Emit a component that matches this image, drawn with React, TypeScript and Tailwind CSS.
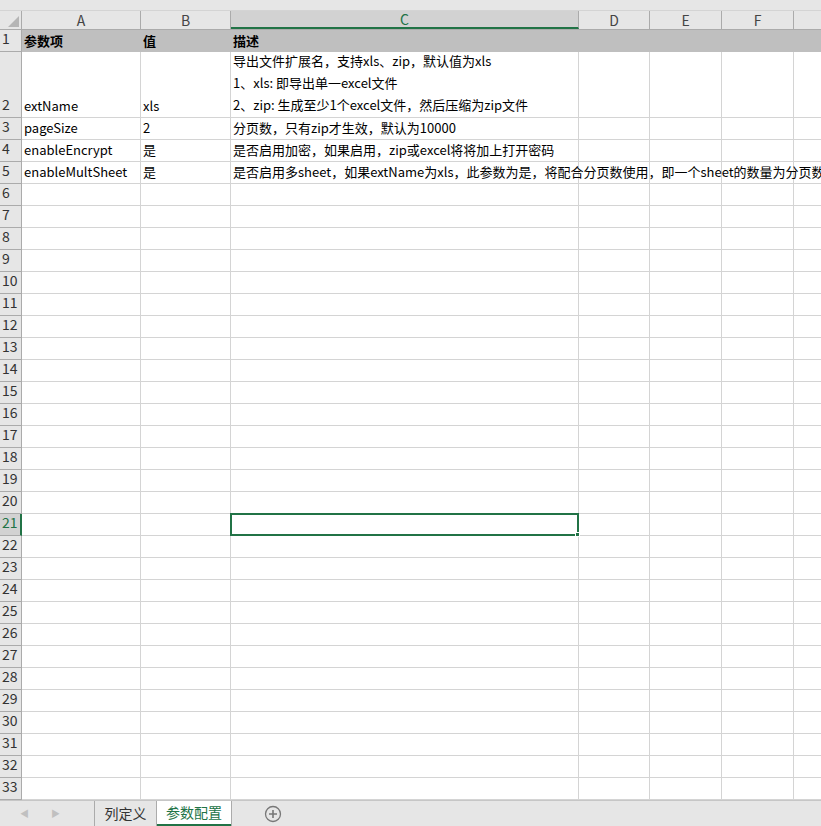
const cols = [
  { k: "A", w: 119 },
  { k: "B", w: 90 },
  { k: "C", w: 348 },
  { k: "D", w: 71 },
  { k: "E", w: 72 },
  { k: "F", w: 72 },
  { k: "", w: 60 },
];
const font = { fontFamily: '"Microsoft YaHei","Noto Sans CJK SC","Liberation Sans",sans-serif' };

type Row = { n: number; h: number; cells: (string | string[])[]; bold?: boolean };
const rows: Row[] = [
  { n: 1, h: 22, bold: true, cells: ["参数项", "值", "描述"] },
  { n: 2, h: 66, cells: ["extName", "xls", ["导出文件扩展名，支持xls、zip，默认值为xls", "1、xls: 即导出单一excel文件", "2、zip: 生成至少1个excel文件，然后压缩为zip文件"]] },
  { n: 3, h: 22, cells: ["pageSize", "2", "分页数，只有zip才生效，默认为10000"] },
  { n: 4, h: 22, cells: ["enableEncrypt", "是", "是否启用加密，如果启用，zip或excel将将加上打开密码"] },
  { n: 5, h: 22, cells: ["enableMultSheet", "是", "是否启用多sheet，如果extName为xls，此参数为是，将配合分页数使用，即一个sheet的数量为分页数"] },
];
for (let i = 6; i <= 33; i++) rows.push({ n: i, h: 22, cells: [] });

export default function App() {
  return (
    <div className="w-[821px] h-[826px] overflow-hidden bg-white flex flex-col text-[13px] text-black" style={font}>
      <div className="h-[11px] bg-[#e6e6e6] border-b border-[#d4d4d4] shrink-0" />
      <div className="flex h-[19px] bg-[#e6e6e6] border-b border-[#ababab] shrink-0">
        <div className="w-[22px] shrink-0 border-r border-[#ababab] relative">
          <div className="absolute right-[2px] bottom-[2px] w-0 h-0 border-l-[11px] border-l-transparent border-b-[11px] border-b-[#b5b5b5]" />
        </div>
        {cols.map((c, i) => (
          <div key={i} style={{ width: c.w }} className={`shrink-0 border-r border-[#ababab] flex items-center justify-center text-[14px] ${c.k === "C" ? "bg-[#d2d2d2] border-b-2 border-b-[#217346] text-[#217346]" : "text-[#444]"}`}>{c.k}</div>
        ))}
      </div>
      <div className="flex-1 overflow-hidden">
        {rows.map((r) => (
          <div key={r.n} style={{ height: r.h }} className={`flex shrink-0 ${r.bold ? "bg-[#bfbfbf] font-bold" : ""}`}>
            <div className={`w-[22px] shrink-0 border-r border-b border-[#ababab] flex items-end pb-[2px] pl-[2px] text-[14px] font-normal ${r.n === 21 ? "bg-[#d2d2d2] text-[#217346] border-r-2 border-r-[#217346]" : "bg-[#e6e6e6] text-[#333]"}`}>{r.n}</div>
            {cols.map((c, i) => {
              const v = r.cells[i];
              return (
                <div key={i} style={{ width: c.w }} className={`shrink-0 relative ${r.bold ? "" : "border-r border-b border-[#d4d4d4]"} flex flex-col justify-end pl-[2px] pb-[1px] whitespace-nowrap overflow-visible`}>
                  {Array.isArray(v) ? v.map((t) => <div key={t} className="h-[22px] leading-[22px]">{t}</div>) : v ? <div className="leading-[20px] relative z-10">{v}</div> : null}
                  {r.n === 21 && c.k === "C" && (
                    <div className="absolute -left-[1px] -top-[1px] w-[349px] h-[23px] border-2 border-[#217346] z-20">
                      <div className="absolute -right-[3px] -bottom-[3px] w-[5px] h-[5px] bg-[#217346] border border-white" />
                    </div>
                  )}
                </div>
              );
            })}
          </div>
        ))}
      </div>
      <div className="h-[26px] shrink-0 bg-[#e6e6e6] border-t border-[#c6c6c6] flex items-stretch text-[14px]">
        <div className="w-[94px] flex items-center gap-[22px] pl-[20px] text-[#c0c0c0] text-[9px]">
          <span>◀</span><span>▶</span>
        </div>
        <div className="w-[63px] border-l border-r border-[#ababab] flex items-center justify-center text-[#333]">列定义</div>
        <div className="w-[74px] bg-white border-b-2 border-[#217346] flex items-center justify-center text-[#217346]">参数配置</div>
        <div className="border-l border-[#ababab] w-[33px]" />
        <div className="flex items-center">
          <svg width="18" height="18" viewBox="0 0 18 18"><circle cx="9" cy="9" r="7.5" fill="none" stroke="#777" strokeWidth="1.3" /><path d="M9 5v8M5 9h8" stroke="#777" strokeWidth="1.6" /></svg>
        </div>
      </div>
    </div>
  );
}
